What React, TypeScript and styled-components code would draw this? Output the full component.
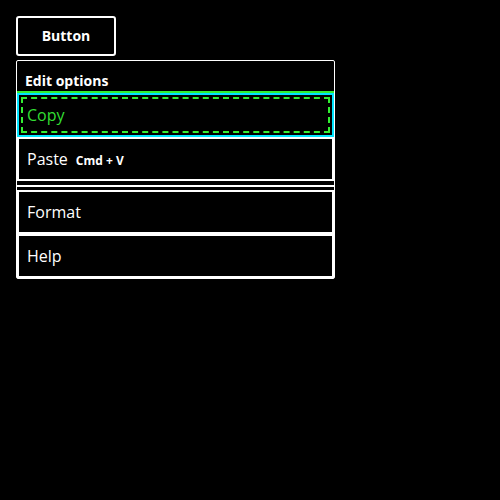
import React from "react";
import styled, { createGlobalStyle } from "styled-components";

const Global = createGlobalStyle`
  html, body { margin: 0; padding: 0; background: #000; }
  body { font-family: "Open Sans", "Liberation Sans", sans-serif; color: #fff; }
`;

const Page = styled.div`
  padding: 16px;
  display: flex;
  flex-direction: column;
  align-items: flex-start;
  gap: 4px;
`;

const Trigger = styled.button`
  width: 100px;
  height: 40px;
  background: #000;
  color: #fff;
  border: 2px solid #fff;
  border-radius: 3px;
  font-family: "Open Sans", "Liberation Sans", sans-serif;
  font-weight: 700;
  font-size: 14px;
  line-height: 20px;
  padding: 0 0 1px;
`;

const Menu = styled.div`
  width: 319px;
  box-sizing: border-box;
  border: 1px solid #fff;
  border-radius: 2px;
  display: flex;
  flex-direction: column;
`;

const Label = styled.div`
  height: 30px;
  box-sizing: border-box;
  padding: 10px 8px 0;
  font-size: 14px;
  font-weight: 700;
  line-height: 20px;
`;

const Item = styled.div<{ $active?: boolean }>`
  height: 44px;
  box-sizing: border-box;
  border: 2px solid ${(p) => (p.$active ? "#00e5ff" : "#fff")};
  padding: 0 8px;
  display: flex;
  align-items: center;
  gap: 8px;
  font-size: 16px;
  color: ${(p) => (p.$active ? "#33dd33" : "#fff")};
  ${(p) =>
    p.$active &&
    `
    outline: 2px dashed #33ee33;
    outline-offset: -6px;
    box-shadow: 0 -2px 0 #33ee33;
    margin-top: 2px;
  `}
`;

const Shortcut = styled.span`
  font-size: 12px;
  font-weight: 700;
  margin-top: 2px;
`;

const Separator = styled.div`
  height: 2px;
  background: #fff;
  margin: 4px 0 3px;
`;

export default function App() {
  return (
    <>
      <Global />
      <Page>
        <Trigger>Button</Trigger>
        <Menu>
          <Label>Edit options</Label>
          <Item $active>Copy</Item>
          <Item>
            Paste <Shortcut>Cmd + V</Shortcut>
          </Item>
          <Separator />
          <Item>Format</Item>
          <Item>Help</Item>
        </Menu>
      </Page>
    </>
  );
}
